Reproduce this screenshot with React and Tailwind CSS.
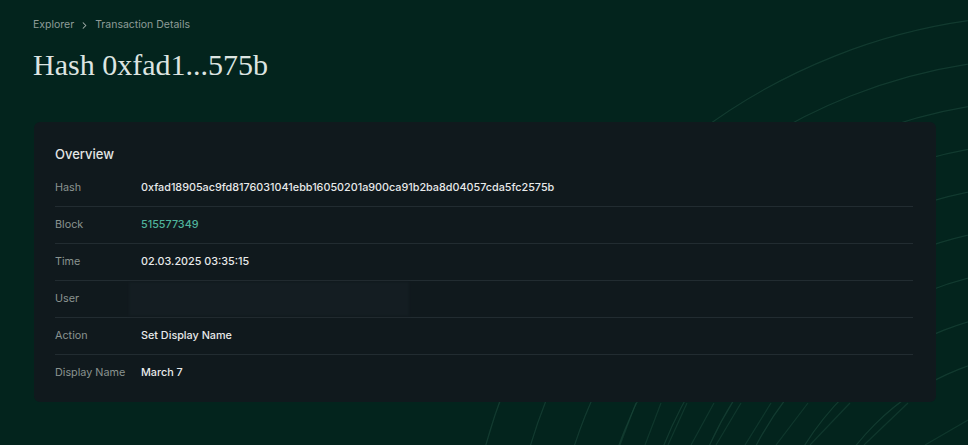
import React from "react";
import { ChevronRight } from "lucide-react";

function Background() {
  const cx = 1050;
  const cy = 600;
  const radii = [585, 542, 500, 458, 416, 374, 332, 290, 248];
  const rays = [
    [636, 403, 620, 445],
    [661, 403, 645, 445],
    [687, 403, 668, 445],
    [714, 403, 691, 445],
    [741, 403, 716, 445],
    [771, 403, 745, 445],
    [808, 403, 776, 445],
    [850, 403, 810, 445],
    [908, 403, 864, 445],
    [968, 420, 925, 445],
  ];
  return (
    <svg
      className="absolute inset-0 pointer-events-none"
      width="968"
      height="445"
      viewBox="0 0 968 445"
    >
      {radii.map((r) => (
        <circle
          key={r}
          cx={cx}
          cy={cy}
          r={r}
          fill="none"
          stroke="#1c4a3c"
          strokeOpacity="0.6"
          strokeWidth="1.2"
        />
      ))}
      {rays.map((l, i) => (
        <line
          key={i}
          x1={l[0]}
          y1={l[1]}
          x2={l[2]}
          y2={l[3]}
          stroke="#1c4a3c"
          strokeOpacity="0.5"
          strokeWidth="1.2"
        />
      ))}
    </svg>
  );
}

const rows = [
  { label: "Hash", value: "0xfad18905ac9fd8176031041ebb16050201a900ca91b2ba8d04057cda5fc2575b" },
  { label: "Block", value: "515577349", link: true },
  { label: "Time", value: "02.03.2025 03:35:15" },
  { label: "User", blur: true },
  { label: "Action", value: "Set Display Name" },
  { label: "Display Name", value: "March 7", last: true },
];

export default function App() {
  return (
    <div
      className="relative w-[968px] h-[445px] overflow-hidden bg-[#03241d]"
      style={{ fontFamily: "Inter, 'Liberation Sans', sans-serif" }}
    >
      <Background />
      <div className="relative flex flex-col pl-[33px] pt-[18px]">
        <div className="flex items-center gap-[5px] h-[14px] text-[10.5px] text-[#8f9c98]">
          <span>Explorer</span>
          <ChevronRight size={11} strokeWidth={2.2} className="text-[#aab4b0]" />
          <span>Transaction Details</span>
        </div>
        <h1
          className="mt-[13px] text-[30px] leading-[40px] text-[#dde4e1]"
          style={{ fontFamily: "'Liberation Serif', 'DejaVu Serif', serif" }}
        >
          Hash 0xfad1...575b
        </h1>
        <div className="mt-[37px] ml-[1px] w-[902px] h-[280px] rounded-[6px] bg-[#10191d] pt-[22px] pl-[21px] pr-[23px] pb-[10px] flex flex-col">
          <div className="h-[20px] leading-[20px] text-[13px] text-[#e3e6e5] font-medium">
            Overview
          </div>
          <div className="mt-[6px] flex flex-col">
            {rows.map((r) => (
              <div
                key={r.label}
                className={
                  "flex items-center h-[37px] " +
                  (r.last ? "" : "border-b border-[#222c31]")
                }
              >
                <div className="w-[86px] shrink-0 text-[10.8px] text-[#8a9390]">
                  {r.label}
                </div>
                {r.blur ? (
                  <div className="ml-[-12px] h-[34px] w-[280px] bg-[#141d22] blur-[1px]" />
                ) : (
                  <div
                    className={
                      "text-[10.8px] font-medium " +
                      (r.link ? "text-[#4fb39b]" : "text-[#e8eaea]")
                    }
                  >
                    {r.value}
                  </div>
                )}
              </div>
            ))}
          </div>
        </div>
      </div>
    </div>
  );
}
